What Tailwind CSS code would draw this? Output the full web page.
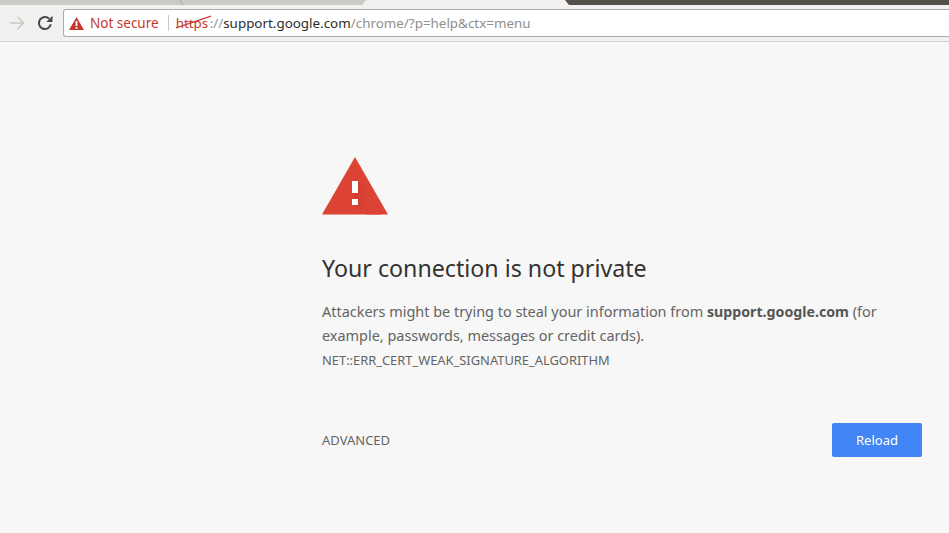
<!doctype html>
<html>
<head>
<meta charset="utf-8">
<script src="https://cdn.jsdelivr.net/npm/@tailwindcss/browser@4"></script>
</head>
<body class="w-[949px] h-[533px] overflow-hidden bg-[#f7f7f7] font-['Noto_Sans','Open_Sans',sans-serif]">
<div class="relative flex h-[5px] bg-[#f2f1ef]">
  <div class="relative w-[366px] h-[5px] bg-[#cbcac6] [clip-path:polygon(0_0,100%_0,calc(100%-4px)_100%,0_100%)]">
    <svg class="absolute left-[179px] top-0 w-[6px] h-[5px]" viewBox="0 0 6 5" fill="none" stroke="#a8a6a2" stroke-width="1"><path d="M1 0 3.500 5"/></svg>
  </div>
  <div class="w-[199px]"></div>
  <div class="flex-1 h-[5px] bg-[#55514a] [clip-path:polygon(0_0,100%_0,100%_100%,4px_100%)]"></div>
</div>
<div class="flex flex-col h-[37px] bg-[#f2f1ef] border-b border-[#d5d3cf]">
  <div class="flex items-start pt-[4px] h-[32px]">
    <div class="w-[63px] shrink-0 flex items-center pl-[9px] gap-[12px] h-[28px]">
      <svg class="w-[16px] h-[16px]" viewBox="0 0 16 16" fill="none" stroke="#c9c8c5" stroke-width="1.500"><path d="M1 8h13.500M8.500 2 14.500 8l-6 6"/></svg>
      <svg class="w-[16px] h-[16px]" viewBox="0 0 16 16" fill="none"><path d="M13.800 9.300A6 6 0 1 1 12.200 3.800" stroke="#484848" stroke-width="2"/><path d="M9.300 7H15.500V0.800z" fill="#484848"/></svg>
    </div>
    <div class="flex-1 h-[28px] bg-white border border-[#aeaca8] border-r-0 rounded-l-[3px] flex items-center text-[13.4px] whitespace-nowrap">
      <svg class="ml-[5px] w-[15px] h-[13px]" viewBox="0 0 15 13"><path d="M7.500 0 15 13H0z" fill="#c5392c"/><path d="M6.600 4h1.800v5H6.600zM6.600 10h1.800v1.800H6.600z" fill="#fff"/></svg>
      <span class="ml-[6px] text-[13.5px] text-[#c5392c]">Not secure</span>
      <span class="ml-[9px] w-px h-[16px] bg-[#c9c7c3]"></span>
      <span class="relative ml-[7px] w-[35px] text-[#c5392c]">https<svg class="absolute left-0 top-[2px] w-[35px] h-[16px]" viewBox="0 0 35 16" fill="none" stroke="#c5392c" stroke-width="1.200"><path d="M0 13 35 1"/></svg></span><span class="-ml-px text-[#8a9aa0]">://</span><span class="text-[#2d2d2d]">support.google.com</span><span class="text-[#8f8f8c]">/chrome/?p=help&amp;ctx=menu</span>
    </div>
  </div>
</div>
<main class="pl-[322px] pr-[27px] pt-[115px]">
  <svg class="w-[66px] h-[58px] block" viewBox="0 0 66 58">
    <defs><linearGradient id="s" x1="0" y1="0" x2="1" y2="0.300"><stop offset="0" stop-color="#cc3d31"/><stop offset="0.700" stop-color="#dc4335"/></linearGradient></defs>
    <path d="M33 0 66 57.500H0z" fill="#dc4335"/>
    <path d="M36 24 52 40 59 57.500H44L30 48z" fill="url(#s)"/>
    <path d="M30 24h6v12h-6zM30 42h6v6h-6z" fill="#fff"/>
  </svg>
  <h1 class="mt-[36px] text-[23.2px] leading-[34px] font-normal text-[#333333]">Your connection is not private</h1>
  <p class="mt-[15px] text-[14.45px] leading-[24px] text-[#646464] w-[580px]">Attackers might be trying to steal your information from <b class="text-[14.2px] text-[#555555] font-bold">support.google.com</b> (for example, passwords, messages or credit cards).</p>
  <p class="mt-[2px] text-[12.9px] leading-[20px] text-[#646464]">NET::ERR_CERT_WEAK_SIGNATURE_ALGORITHM</p>
  <div class="mt-[53px] flex items-center justify-between">
    <span class="mt-[2px] text-[13px] text-[#646464]">ADVANCED</span>
    <button class="w-[90px] h-[34px] pt-[1px] rounded-[2px] bg-[#4285f4] text-white text-[13px]">Reload</button>
  </div>
</main>
</body>
</html>
